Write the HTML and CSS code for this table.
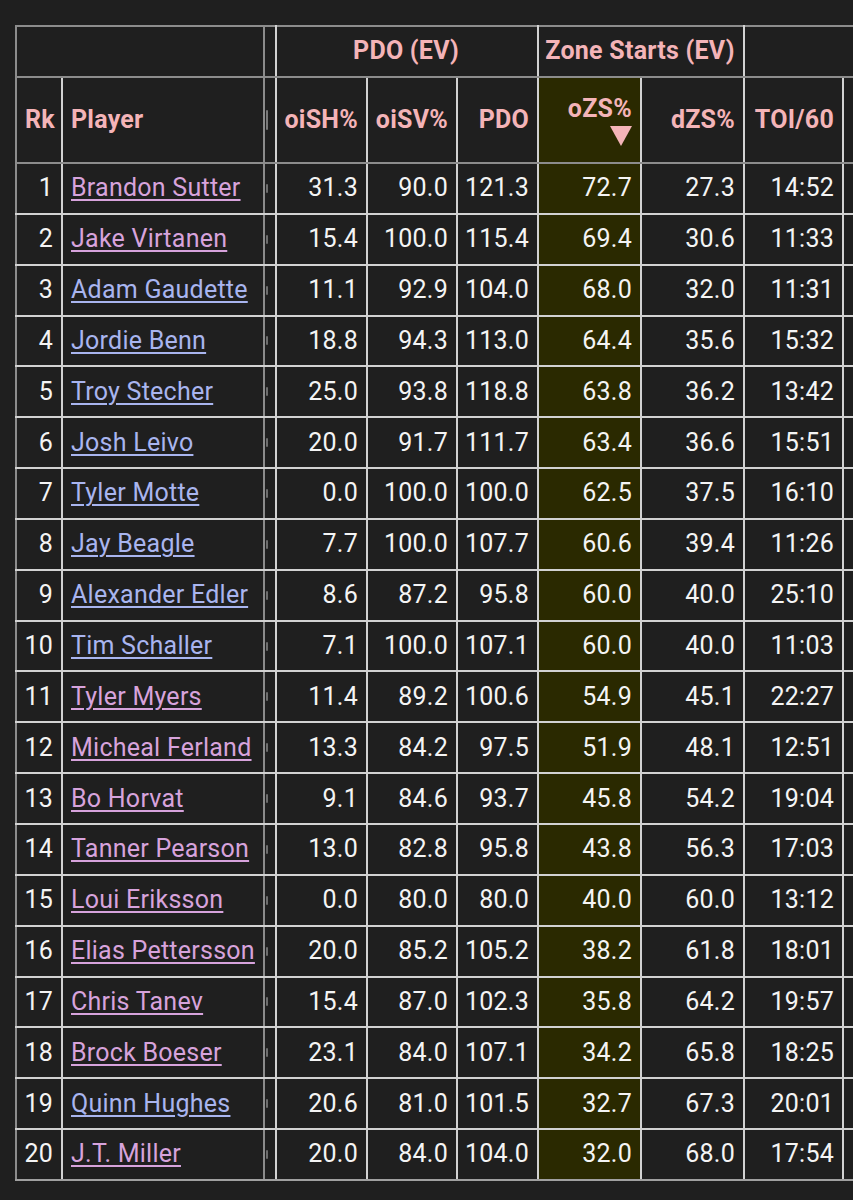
FILE: index.html
```html
<!DOCTYPE html>
<html lang="en">
<head>
<meta charset="utf-8">
<title>PDO and Zone Starts</title>
<link rel="stylesheet" href="styles.css">
</head>
<body>
<div class="wrap">
  <table class="stats">
    <colgroup>
      <col class="c-rk">
      <col class="c-player">
      <col class="c-x">
      <col class="c-sh">
      <col class="c-sv">
      <col class="c-pdo">
      <col class="c-ozs">
      <col class="c-dzs">
      <col class="c-toi">
      <col class="c-more">
    </colgroup>
    <thead>
      <tr class="over">
        <th colspan="2" class="player"></th>
        <th class="x"></th>
        <th colspan="3">PDO (EV)</th>
        <th colspan="2">Zone Starts (EV)</th>
        <th colspan="2"></th>
      </tr>
      <tr class="cols">
        <th class="rk left">Rk</th>
        <th class="player left">Player</th>
        <th class="x"><span class="frag tall"></span></th>
        <th>oiSH%</th>
        <th>oiSV%</th>
        <th>PDO</th>
        <th class="sorted"><span class="lbl">oZS%</span><svg class="arrow" width="22" height="20" viewBox="0 0 22 20"><polygon points="0,0 22,0 11,20" fill="#f4b4b8"/></svg></th>
        <th>dZS%</th>
        <th>TOI/60</th>
        <th></th>
      </tr>
    </thead>
    <tbody>
      <tr><td class="rk">1</td><td class="player"><a class="v" href="#">Brandon Sutter</a></td><td class="x"><span class="frag"></span></td><td>31.3</td><td>90.0</td><td>121.3</td><td class="sorted">72.7</td><td>27.3</td><td>14:52</td><td></td></tr>
      <tr><td class="rk">2</td><td class="player"><a class="v" href="#">Jake Virtanen</a></td><td class="x"><span class="frag"></span></td><td>15.4</td><td>100.0</td><td>115.4</td><td class="sorted">69.4</td><td>30.6</td><td>11:33</td><td></td></tr>
      <tr><td class="rk">3</td><td class="player"><a href="#">Adam Gaudette</a></td><td class="x"><span class="frag"></span></td><td>11.1</td><td>92.9</td><td>104.0</td><td class="sorted">68.0</td><td>32.0</td><td>11:31</td><td></td></tr>
      <tr><td class="rk">4</td><td class="player"><a href="#">Jordie Benn</a></td><td class="x"><span class="frag"></span></td><td>18.8</td><td>94.3</td><td>113.0</td><td class="sorted">64.4</td><td>35.6</td><td>15:32</td><td></td></tr>
      <tr><td class="rk">5</td><td class="player"><a href="#">Troy Stecher</a></td><td class="x"><span class="frag"></span></td><td>25.0</td><td>93.8</td><td>118.8</td><td class="sorted">63.8</td><td>36.2</td><td>13:42</td><td></td></tr>
      <tr><td class="rk">6</td><td class="player"><a href="#">Josh Leivo</a></td><td class="x"><span class="frag"></span></td><td>20.0</td><td>91.7</td><td>111.7</td><td class="sorted">63.4</td><td>36.6</td><td>15:51</td><td></td></tr>
      <tr><td class="rk">7</td><td class="player"><a href="#">Tyler Motte</a></td><td class="x"><span class="frag"></span></td><td>0.0</td><td>100.0</td><td>100.0</td><td class="sorted">62.5</td><td>37.5</td><td>16:10</td><td></td></tr>
      <tr><td class="rk">8</td><td class="player"><a href="#">Jay Beagle</a></td><td class="x"><span class="frag"></span></td><td>7.7</td><td>100.0</td><td>107.7</td><td class="sorted">60.6</td><td>39.4</td><td>11:26</td><td></td></tr>
      <tr><td class="rk">9</td><td class="player"><a href="#">Alexander Edler</a></td><td class="x"><span class="frag"></span></td><td>8.6</td><td>87.2</td><td>95.8</td><td class="sorted">60.0</td><td>40.0</td><td>25:10</td><td></td></tr>
      <tr><td class="rk">10</td><td class="player"><a href="#">Tim Schaller</a></td><td class="x"><span class="frag"></span></td><td>7.1</td><td>100.0</td><td>107.1</td><td class="sorted">60.0</td><td>40.0</td><td>11:03</td><td></td></tr>
      <tr><td class="rk">11</td><td class="player"><a class="v" href="#">Tyler Myers</a></td><td class="x"><span class="frag"></span></td><td>11.4</td><td>89.2</td><td>100.6</td><td class="sorted">54.9</td><td>45.1</td><td>22:27</td><td></td></tr>
      <tr><td class="rk">12</td><td class="player"><a class="v" href="#">Micheal Ferland</a></td><td class="x"><span class="frag"></span></td><td>13.3</td><td>84.2</td><td>97.5</td><td class="sorted">51.9</td><td>48.1</td><td>12:51</td><td></td></tr>
      <tr><td class="rk">13</td><td class="player"><a class="v" href="#">Bo Horvat</a></td><td class="x"><span class="frag"></span></td><td>9.1</td><td>84.6</td><td>93.7</td><td class="sorted">45.8</td><td>54.2</td><td>19:04</td><td></td></tr>
      <tr><td class="rk">14</td><td class="player"><a class="v" href="#">Tanner Pearson</a></td><td class="x"><span class="frag"></span></td><td>13.0</td><td>82.8</td><td>95.8</td><td class="sorted">43.8</td><td>56.3</td><td>17:03</td><td></td></tr>
      <tr><td class="rk">15</td><td class="player"><a class="v" href="#">Loui Eriksson</a></td><td class="x"><span class="frag"></span></td><td>0.0</td><td>80.0</td><td>80.0</td><td class="sorted">40.0</td><td>60.0</td><td>13:12</td><td></td></tr>
      <tr><td class="rk">16</td><td class="player"><a class="v" href="#">Elias Pettersson</a></td><td class="x"><span class="frag"></span></td><td>20.0</td><td>85.2</td><td>105.2</td><td class="sorted">38.2</td><td>61.8</td><td>18:01</td><td></td></tr>
      <tr><td class="rk">17</td><td class="player"><a class="v" href="#">Chris Tanev</a></td><td class="x"><span class="frag"></span></td><td>15.4</td><td>87.0</td><td>102.3</td><td class="sorted">35.8</td><td>64.2</td><td>19:57</td><td></td></tr>
      <tr><td class="rk">18</td><td class="player"><a class="v" href="#">Brock Boeser</a></td><td class="x"><span class="frag"></span></td><td>23.1</td><td>84.0</td><td>107.1</td><td class="sorted">34.2</td><td>65.8</td><td>18:25</td><td></td></tr>
      <tr><td class="rk">19</td><td class="player"><a href="#">Quinn Hughes</a></td><td class="x"><span class="frag"></span></td><td>20.6</td><td>81.0</td><td>101.5</td><td class="sorted">32.7</td><td>67.3</td><td>20:01</td><td></td></tr>
      <tr><td class="rk">20</td><td class="player"><a class="v" href="#">J.T. Miller</a></td><td class="x"><span class="frag"></span></td><td>20.0</td><td>84.0</td><td>104.0</td><td class="sorted">32.0</td><td>68.0</td><td>17:54</td><td></td></tr>
    </tbody>
  </table>
</div>
</body>
</html>
```

FILE: styles.css
```css
html, body {
  margin: 0;
  padding: 0;
  background: #1f1f1f;
}

body {
  font-family: Roboto, "Liberation Sans", sans-serif;
  color: #f4f4f4;
  width: 853px;
  height: 1200px;
  overflow: hidden;
}

.wrap {
  overflow: hidden;
  padding: 25px 0 0 15px;
}

.stats {
  border-collapse: collapse;
  table-layout: fixed;
  width: 927px;
  font-size: 25px;
  letter-spacing: 0.25px;
  line-height: 28px;
}

.c-rk { width: 46px; }
.c-player { width: 202px; }
.c-x { width: 12px; }
.c-sh { width: 91px; }
.c-sv { width: 90px; }
.c-pdo { width: 81px; }
.c-ozs { width: 103px; }
.c-dzs { width: 103px; }
.c-toi { width: 99px; }
.c-more { width: 100px; }

.stats th,
.stats td {
  border: 2px solid #d2d2d2;
  padding: 0 8px 0 6px;
  text-align: right;
  vertical-align: middle;
  white-space: nowrap;
  overflow: hidden;
  background: #1f1f1f;
}

.stats th {
  color: #f4b4b8;
  font-weight: 700;
  border-top-color: #8c8c8c;
  border-bottom-color: #8c8c8c;
}

.stats .over th {
  text-align: center;
  padding-bottom: 2px;
}

.stats tr > :first-child {
  border-left-color: #8c8c8c;
}

.stats tbody tr:last-child td {
  border-bottom-color: #a0a0a0;
}

.stats .player {
  border-right-color: #8c8c8c;
  text-align: left;
  padding-left: 8px;
  padding-right: 0;
}

.stats .left {
  text-align: left;
  padding-left: 8px;
}

.over { height: 51px; }
.cols { height: 86px; }
.stats tbody tr { height: 50.85px; }

.stats .x {
  padding: 0;
  text-align: left;
}

.frag {
  display: block;
  width: 2px;
  height: 9px;
  margin-left: 1px;
  border-radius: 1px;
  background: #6e6e6e;
}

.frag.tall {
  height: 20px;
  background: #7a7a7a;
}

.stats .sorted {
  background: #2a2900;
}

.lbl {
  display: block;
}

.arrow {
  display: block;
  margin: 3px 0 0 auto;
}

.stats a {
  color: #a9b5ef;
  text-decoration: underline;
  text-decoration-thickness: 2px;
  text-underline-offset: 3px;
}

.stats a.v {
  color: #d7a3dc;
}
```
